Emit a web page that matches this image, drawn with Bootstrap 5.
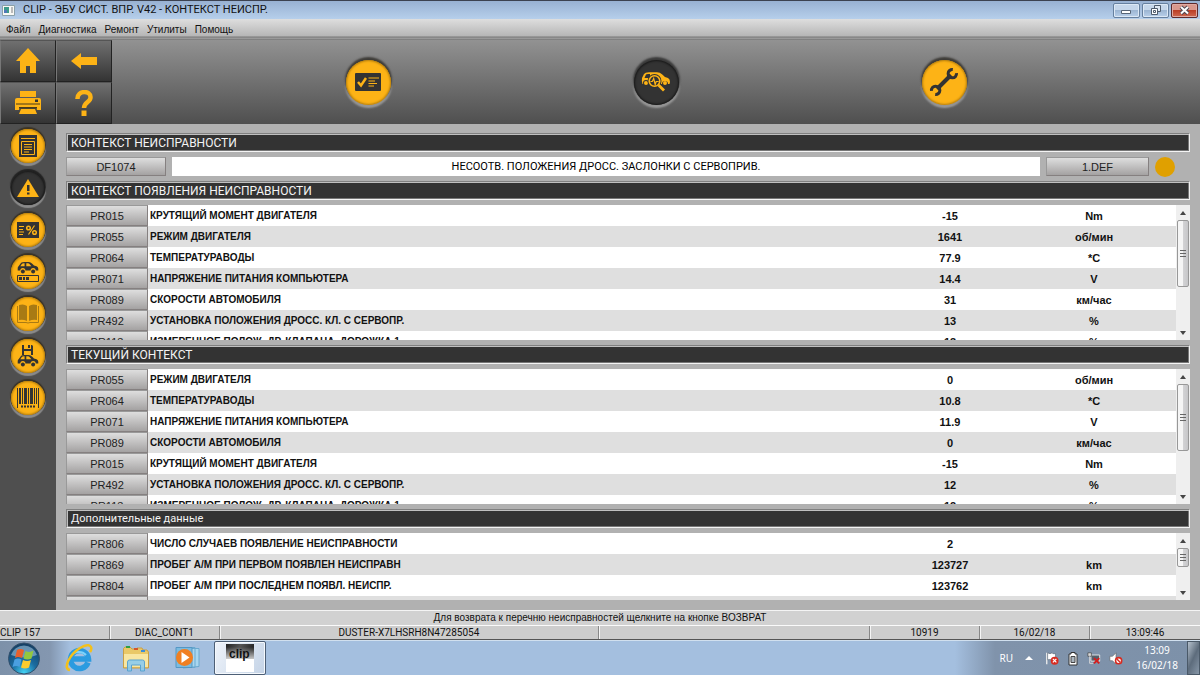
<!DOCTYPE html>
<html lang="ru">
<head>
<meta charset="utf-8">
<meta name="viewport" content="width=device-width, initial-scale=1">
<title>CLIP - ЭБУ СИСТ. ВПР. V42 - КОНТЕКСТ НЕИСПР.</title>
<link href="https://cdn.jsdelivr.net/npm/bootstrap@5.3.0/dist/css/bootstrap.min.css" rel="stylesheet">
<style>
  body { font-family: "Liberation Sans", Arial, sans-serif; font-size: 11px; line-height: 14px; color: #111; background: #b1b1b1; }
  button { font-size: 11px; line-height: 14px; color: #222; }
  svg { display: block; flex: none; }

  .titlebar { height: 19px; padding: 0 2px; border-top: 1px solid #3c4250; background: linear-gradient(#98b1d2, #b6cfeb); font-family: Roboto, sans-serif; font-size: 11px; }
  .winbtns { gap: 2px; }
  .winbtn { width: 27px; height: 15px; border: 1px solid #66809f; border-radius: 2px; background: linear-gradient(#c5d6ea 45%, #9db6d3 50%, #b9d0ea); box-shadow: inset 0 0 0 1px #dce8f5; }
  .winbtn-close { border-color: #5e2a2c; background: linear-gradient(#d9988d 45%, #bb3f27 50%, #cf6a52); box-shadow: inset 0 0 0 1px #e0aaa2; }
  .menubar { height: 21px; padding-left: 6px; background: linear-gradient(#dedede, #b6b6b6 17px, #777 18px, #999 19px, #999 20px, #686868 21px); font-size: 10px; }
  .menubar a { color: #111; text-decoration: none; }

  .topband { background: linear-gradient(#929292, #4f4f4f); height: 84px; }
  .navpad { width: 112px; display: grid; grid-template-columns: 1fr 1fr; }
  .navbtn { display: grid; place-items: center; padding: 0; border: 1px solid #333; border-color: #555 #222 #222 #777; background: linear-gradient(#707070, #343434); }
  .steps { padding: 0 112px; }
  .roundbtn { border: 0; border-radius: 50%; padding: 0; display: grid; place-items: center; background: #fdb316; color: #333; width: 34px; height: 34px;
    box-shadow: 0 -1px 1px 1px #3a3326, 0 2px 1px 1px #8c8c8c, inset 0 0 2px 1px #b77f0c; }
  .roundbtn.big { width: 45px; height: 45px; box-shadow: 0 -2px 2px 1px #3d3b37, 0 2px 2px 1px #999, inset 0 0 2px 1px #b77f0c; }
  .roundbtn.on { background: #333; color: #fdb316; box-shadow: 0 -1px 1px 1px #222, 0 2px 1px 1px #8c8c8c, inset 0 0 2px 1px #181818; }
  .roundbtn.big.on { box-shadow: 0 -2px 2px 1px #393939, 0 2px 2px 1px #999, inset 0 0 2px 1px #181818; }

  .middle, .workarea { min-width: 0; min-height: 0; }
  .sidebar { width: 56px; background: #4f4f4f; padding-top: 5px; gap: 8px; }
  .workarea { padding: 9px 10px 10px; gap: 5px; }
  .caption { height: 19px; margin: 0; padding: 0 4px; background: #333; color: #f4f4f4; font-family: Roboto, sans-serif; font-weight: 400; font-size: 12px; line-height: 18px;
    border: 1px solid #808080; border-right-color: #eee; border-bottom-color: #f4f4f4; box-shadow: inset 1px 1px 0 #c0c0c0, inset -1px -1px 0 #777; }
  .caption-minor { font-size: 11px; }
  .faultrow { height: 19px; gap: 6px; }
  .metal { border: 1px solid #999; border-right-color: #858080; border-bottom-color: #858080; background: linear-gradient(#dedede, #a4a2a2); padding: 0; }
  .faultrow .metal { width: 100px; flex: none; }
  .faultrow .state { width: 103px; }
  .faultrow input { border: 0; border-radius: 0; background: #fff; text-align: center; min-width: 0; padding: 0; font-family: Roboto, sans-serif; }
  .lamp { width: 20px; height: 20px; margin-right: 15px; border-radius: 50%; background: #e0a000; flex: none; }

  .panel { min-height: 0; background: #f0f0f0; }
  .panel-tall { flex: 135 1 0; }
  .panel-short { flex: 67 1 0; }
  .params { width: 100%; table-layout: fixed; font-weight: 700; background: #fff; }
  .params tr { height: 21px; }
  .params tr:nth-child(even) { background: #dfdfdf; }
  .params td, .params th { padding: 0; height: 21px; vertical-align: middle; white-space: nowrap; }
  .params td { text-align: center; }
  .params .what { text-align: left; padding-left: 2px; font-size: 10px; }
  .params .metal { width: 82px; height: 21px; display: block; }
  .c-code { width: 82px; } .c-val { width: 124px; } .c-unit { width: 164px; }

  .scroller { width: 14px; flex: none; background: #efefef; }
  .arrow { height: 15px; display: grid; place-items: center; flex: none; }
  .thumb { border: 1px solid #989898; border-radius: 2px; background: linear-gradient(90deg, #f5f5f5 45%, #d2d2d4 55%, #c6c6c8); display: grid; place-items: center; height: 67px; margin: 0 1px; flex: none; }
  .thumb-short { height: 19px; }

  .hint { height: 15px; border-top: 1px solid #f4f4f4; background: #d1d1d1; font-size: 10px; }
  .statusbar { height: 15px; background: #cdcdcd; font-family: Roboto, sans-serif; font-size: 10px; border-top: 1px solid #fafafa; border-bottom: 1px solid #555; }
  .statusbar > div { border-right: 1px solid #888; box-shadow: 1px 0 0 #f5f5f5; text-align: center; }
  .cell { width: 110px; }
  .cell-car { flex: 380 1 0; } .cell-free { flex: 272 1 0; }

  .taskbar { height: 35px; background: linear-gradient(90deg, #7d91a9 0, #8497b0 50px, #a4bfdf 70px, #a4bfdf calc(100% - 245px), #8093ab calc(100% - 205px), #7d91a9); border-top: 1px solid #d1e0ef; }
  .taskbar button { border: 0; background: none; padding: 0; display: grid; place-items: center; width: 52px; }
  .taskbar .orb { width: 48px; }
  .taskbar .browser { width: 62px; }
  .apps .current { border: 1px solid #4d5f76; border-radius: 2px; background: linear-gradient(120deg, #eef3fa, #c4d3e6); box-shadow: inset 0 0 0 1px #f5f9fd; }
  .tray { color: #fff; font-family: "Noto Sans", sans-serif; font-size: 10px; }
  .clock { width: 60px; text-align: center; line-height: 15px; }
  .taskbar .peek { width: 13px; border: 1px solid #4a5968; background: linear-gradient(115deg, #b4c0cc, #5d6c7c 50%, #8797a8); }
</style>
</head>
<body class="vh-100 d-flex flex-column overflow-hidden">

<svg width="0" height="0" class="position-absolute" aria-hidden="true">
  <symbol id="car" viewBox="0 0 24 14"><path fill="currentColor" fill-rule="evenodd" d="M1 5 4 1Q5 0 8 0h5q2 0 4 2l2 2 3 1q2 1 2 3v2h-3a3 3 0 0 0-6 0H9a3 3 0 0 0-6 0H0V7q0-1 1-2ZM5 2 3 5h5V1.500H7Q6 1.500 5 2Zm5-.5V5h6l-2-2.500q-1-1-2-1Z"/><circle cx="6" cy="11" r="2.300" fill="currentColor"/><circle cx="18" cy="11" r="2.300" fill="currentColor"/></symbol>
  <symbol id="up" viewBox="0 0 6 4"><path fill="#444" d="M3 0 6 4H0Z"/></symbol>
  <symbol id="down" viewBox="0 0 6 4"><path fill="#444" d="M3 4 6 0H0Z"/></symbol>
  <symbol id="grip" viewBox="0 0 6 8"><path stroke="#666" d="M0 .5h6M0 3.500h6M0 6.500h6"/></symbol>
</svg>

<header class="titlebar d-flex align-items-center flex-shrink-0">
  <svg width="13" height="11" viewBox="0 0 13 11"><path fill="#f8f8f4" stroke="#8ba0a8" d="M.5.500h12v10H.5z"/><path fill="#3d9b8a" d="M2 2h5v6H2z"/><path fill="#5078b8" d="M2 5h3v3H2z"/><path fill="#bbb" d="M9 2h2v6H9z"/></svg>
  <span class="ms-2 flex-grow-1">CLIP - ЭБУ СИСТ. ВПР. V42 - КОНТЕКСТ НЕИСПР.</span>
  <div class="winbtns d-flex">
    <button class="winbtn p-0" aria-label="Свернуть"><svg class="mx-auto" width="11" height="11" viewBox="0 0 11 11"><path fill="#fff" stroke="#576577" d="M.5 5.500h9v3h-9z"/></svg></button>
    <button class="winbtn p-0" aria-label="Восстановить"><svg class="mx-auto" width="12" height="11" viewBox="0 0 12 11"><path fill="#dde7f2" stroke="#4d5a6b" d="M4.500.5h6v6h-6z"/><path fill="#fff" stroke="#4d5a6b" d="M1.500 3.500h6v6h-6z"/><path fill="none" stroke="#4d5a6b" d="M3.500 5.500h2v2h-2z"/></svg></button>
    <button class="winbtn winbtn-close p-0" aria-label="Закрыть"><svg class="mx-auto" width="11" height="11" viewBox="0 0 11 11"><path stroke="#4c4652" stroke-width="4" d="m2 2 7 6.500M9 2 2 8.500"/><path stroke="#fff" stroke-width="2" d="m2 2 7 6.500M9 2 2 8.500"/></svg></button>
  </div>
</header>

<nav class="menubar d-flex align-items-center flex-shrink-0 gap-2" aria-label="Меню">
  <a href="#">Файл</a><a href="#">Диагностика</a><a href="#">Ремонт</a><a href="#">Утилиты</a><a href="#">Помощь</a>
</nav>

<div class="topband d-flex flex-shrink-0">
  <div class="navpad">
    <button class="navbtn" aria-label="Домой"><svg width="24" height="26" viewBox="0 0 24 26"><path fill="#fdb316" d="M12 0 24 13h-4v12h-6v-7h-4v7H4V13H0Z"/></svg></button>
    <button class="navbtn" aria-label="Назад"><svg width="26" height="16" viewBox="0 0 26 16"><path fill="#fdb316" d="M0 8 10 0v4h16v8H10v4Z"/></svg></button>
    <button class="navbtn" aria-label="Печать"><svg width="26" height="24" viewBox="0 0 26 24"><path fill="#fdb316" d="M5 0h16v6H5zM2 7h22q2 0 2 2v10h-4l-1-3H5l-1 3H0V9q0-2 2-2Z"/><path fill="#fdb316" d="M6 18h14l2 5H4Z"/><path fill="#4a3a18" d="M1 12.500h24v1H1zM4 16h18v1.500H4z"/><path fill="#333" d="M20 8.500h3v2.500h-3z"/></svg></button>
    <button class="navbtn" aria-label="Справка"><svg width="18" height="26" viewBox="0 0 18 26"><path fill="none" stroke="#fdb316" stroke-width="4.500" d="M2.500 9C2 0 16 0 15.500 7.500 15.500 12 9 12 9 18"/><path fill="#fdb316" d="M6.500 20.500h5V26h-5z"/></svg></button>
  </div>
  <div class="steps flex-grow-1 d-flex align-items-center">
    <div class="col d-flex justify-content-center"><button class="roundbtn big" aria-label="Контроль"><svg width="26" height="18" viewBox="0 0 26 18"><rect width="26" height="18" rx="1" fill="#333"/><path fill="none" stroke="#fdb316" stroke-width="2.500" d="m3 9 3 3.500L11 5"/><path stroke="#fdb316" stroke-width="1.200" d="M13.500 5H24M13.500 8H20M13.500 10.500H22M13.500 13H19"/></svg></button></div>
    <div class="col d-flex justify-content-center"><button class="roundbtn big on" aria-label="Диагностика"><svg width="30" height="20" viewBox="0 0 30 20"><path fill="currentColor" fill-rule="evenodd" d="M1 6 3 2Q4 .5 8 .3h8q3 0 5 2l3 2.700 3 1q2 1 2 4l-.5 2h-1.500a3 3 0 0 0-6 0H1.500Q.5 8 1 6ZM5 2.500 3.500 6H9V2H7Q5.500 2 5 2.500Z"/><circle cx="24" cy="11" r="2" fill="currentColor"/><circle cx="5" cy="11" r="3" fill="#333"/><circle cx="5" cy="11" r="2" fill="currentColor"/><circle cx="13.500" cy="9" r="7" fill="#333"/><circle cx="13.500" cy="9" r="5.300" fill="#333" stroke="currentColor" stroke-width="1.600"/><path fill="none" stroke="currentColor" stroke-width="1.200" d="M9.500 9.500h1.800l1.400-3 1.500 6 1-3h2.500"/><path stroke="#333" stroke-width="5" d="m19 14 2 2"/><path stroke="currentColor" stroke-width="2.800" d="m17.500 13 5.500 5.500"/></svg></button></div>
    <div class="col d-flex justify-content-center"><button class="roundbtn big" aria-label="Ремонт"><svg width="30" height="30" viewBox="0 0 30 30"><path stroke="#333" stroke-width="4" d="m8 22 14-14"/><path fill="none" stroke="#333" stroke-width="3" d="M23.800 2.500a4.200 4.200 0 1 0 3.700 3.700M6.200 27.500a4.200 4.200 0 1 0-3.700-3.700"/></svg></button></div>
  </div>
</div>

<div class="middle d-flex flex-grow-1">
  <nav class="sidebar d-flex flex-column align-items-center flex-shrink-0" aria-label="Инструменты">
    <button class="roundbtn" aria-label="Отчёт"><svg width="18" height="22" viewBox="0 0 18 22"><path fill="#333" d="M0 0h18v22H0z"/><path stroke="#fdb316" fill="none" d="M2 3.500h14M2.500 6.500h13v13h-13z"/><path stroke="#fdb316" d="M5 9.500h8M5 12h8M5 14.500h8M5 17h5"/></svg></button>
    <button class="roundbtn on" aria-label="Неисправности"><svg width="22" height="18" viewBox="0 0 22 18"><path fill="#fdb316" d="M11 0 22 18H0Z"/><path fill="#333" d="M10 6h2.500v6H10zM10 13.500h2.500v2H10z"/></svg></button>
    <button class="roundbtn" aria-label="Параметры"><svg width="22" height="16" viewBox="0 0 22 16"><path fill="#333" d="M0 0h22v16H0z"/><path stroke="#fdb316" fill="none" stroke-width="1.200" d="M2 4.500h5M2 7.500h4M2 10h5M2 12.500h4M11.500 12.500l6-9"/><circle cx="11.500" cy="6" r="1.800" fill="none" stroke="#fdb316" stroke-width="1.500"/><circle cx="17.500" cy="10.500" r="1.800" fill="none" stroke="#fdb316" stroke-width="1.500"/></svg></button>
    <button class="roundbtn" aria-label="Состояние автомобиля"><svg width="22" height="20" viewBox="0 0 22 20"><use href="#car" width="22" height="12"/><path fill="none" stroke="#333" d="M.5 13.500h21v6H.5z"/><path fill="#333" d="M2 15h3v3H2zM6 15h2v3H6zM9 15h3v3H9z"/></svg></button>
    <button class="roundbtn" aria-label="Документация"><svg width="22" height="20" viewBox="0 0 22 20"><path fill="#a87a14" d="M2 1q5-1.500 8 1v15q-4-2-8-1zM20 1q-5-1.500-8 1v15q4-2 8-1z"/><path fill="none" stroke="#a87a14" d="M.5 2v16.500H9q2 1 4 0h8.500V2"/></svg></button>
    <button class="roundbtn" aria-label="Сохранить"><svg width="22" height="22" viewBox="0 0 22 22"><path fill="#333" fill-rule="evenodd" d="M5 0h2v4h7V0h1l1 1v9H5zM7 6v4h7V6z"/><path fill="#333" d="M11 0h2v3h-2z"/><use href="#car" y="10" width="22" height="12"/></svg></button>
    <button class="roundbtn" aria-label="Штрихкод"><svg width="22" height="20" viewBox="0 0 22 20"><path fill="#333" d="M0 0h1v20H0zM2 0h2v16H2zM5 0h1v16H5zM7 0h3v16H7zM11 0h1v16h-1zM13 0h3v16h-3zM17 0h1v16h-1zM19 0h1v16h-1zM21 0h1v20h-1z"/><path stroke="#333" stroke-width="2" stroke-dasharray="2 1" d="M4 18.500h14"/></svg></button>
  </nav>

  <main class="workarea d-flex flex-column flex-grow-1">
    <h1 class="caption flex-shrink-0">КОНТЕКСТ НЕИСПРАВНОСТИ</h1>
    <div class="faultrow d-flex flex-shrink-0">
      <button class="metal">DF1074</button>
      <input class="flex-grow-1" type="text" readonly aria-label="Неисправность" value="НЕСООТВ. ПОЛОЖЕНИЯ ДРОСС. ЗАСЛОНКИ С СЕРВОПРИВ.">
      <button class="metal state">1.DEF</button>
      <span class="lamp"></span>
    </div>

    <h2 class="caption flex-shrink-0">КОНТЕКСТ ПОЯВЛЕНИЯ НЕИСПРАВНОСТИ</h2>
    <section class="panel panel-tall d-flex">
      <div class="flex-grow-1 overflow-hidden">
        <table class="params">
          <colgroup><col class="c-code"><col><col class="c-val"><col class="c-unit"></colgroup>
          <tbody>
          <tr><th><button class="metal">PR015</button></th><td class="what">КРУТЯЩИЙ МОМЕНТ ДВИГАТЕЛЯ</td><td>-15</td><td>Nm</td></tr>
          <tr><th><button class="metal">PR055</button></th><td class="what">РЕЖИМ ДВИГАТЕЛЯ</td><td>1641</td><td>об/мин</td></tr>
          <tr><th><button class="metal">PR064</button></th><td class="what">ТЕМПЕРАТУРАВОДЫ</td><td>77.9</td><td>*C</td></tr>
          <tr><th><button class="metal">PR071</button></th><td class="what">НАПРЯЖЕНИЕ ПИТАНИЯ КОМПЬЮТЕРА</td><td>14.4</td><td>V</td></tr>
          <tr><th><button class="metal">PR089</button></th><td class="what">СКОРОСТИ АВТОМОБИЛЯ</td><td>31</td><td>км/час</td></tr>
          <tr><th><button class="metal">PR492</button></th><td class="what">УСТАНОВКА ПОЛОЖЕНИЯ ДРОСС. КЛ. С СЕРВОПР.</td><td>13</td><td>%</td></tr>
          <tr><th><button class="metal">PR113</button></th><td class="what">ИЗМЕРЕННОЕ ПОЛОЖ. ДР. КЛАПАНА, ДОРОЖКА 1</td><td>13</td><td>%</td></tr>
          </tbody>
        </table>
      </div>
      <div class="scroller d-flex flex-column">
        <div class="arrow"><svg width="6" height="4"><use href="#up"/></svg></div>
        <div class="thumb"><svg width="6" height="8"><use href="#grip"/></svg></div>
        <div class="arrow mt-auto"><svg width="6" height="4"><use href="#down"/></svg></div>
      </div>
    </section>

    <h2 class="caption flex-shrink-0">ТЕКУЩИЙ КОНТЕКСТ</h2>
    <section class="panel panel-tall d-flex">
      <div class="flex-grow-1 overflow-hidden">
        <table class="params">
          <colgroup><col class="c-code"><col><col class="c-val"><col class="c-unit"></colgroup>
          <tbody>
          <tr><th><button class="metal">PR055</button></th><td class="what">РЕЖИМ ДВИГАТЕЛЯ</td><td>0</td><td>об/мин</td></tr>
          <tr><th><button class="metal">PR064</button></th><td class="what">ТЕМПЕРАТУРАВОДЫ</td><td>10.8</td><td>*C</td></tr>
          <tr><th><button class="metal">PR071</button></th><td class="what">НАПРЯЖЕНИЕ ПИТАНИЯ КОМПЬЮТЕРА</td><td>11.9</td><td>V</td></tr>
          <tr><th><button class="metal">PR089</button></th><td class="what">СКОРОСТИ АВТОМОБИЛЯ</td><td>0</td><td>км/час</td></tr>
          <tr><th><button class="metal">PR015</button></th><td class="what">КРУТЯЩИЙ МОМЕНТ ДВИГАТЕЛЯ</td><td>-15</td><td>Nm</td></tr>
          <tr><th><button class="metal">PR492</button></th><td class="what">УСТАНОВКА ПОЛОЖЕНИЯ ДРОСС. КЛ. С СЕРВОПР.</td><td>12</td><td>%</td></tr>
          <tr><th><button class="metal">PR113</button></th><td class="what">ИЗМЕРЕННОЕ ПОЛОЖ. ДР. КЛАПАНА, ДОРОЖКА 1</td><td>12</td><td>%</td></tr>
          </tbody>
        </table>
      </div>
      <div class="scroller d-flex flex-column">
        <div class="arrow"><svg width="6" height="4"><use href="#up"/></svg></div>
        <div class="thumb"><svg width="6" height="8"><use href="#grip"/></svg></div>
        <div class="arrow mt-auto"><svg width="6" height="4"><use href="#down"/></svg></div>
      </div>
    </section>

    <h2 class="caption caption-minor flex-shrink-0">Дополнительные данные</h2>
    <section class="panel panel-short d-flex">
      <div class="flex-grow-1 overflow-hidden">
        <table class="params">
          <colgroup><col class="c-code"><col><col class="c-val"><col class="c-unit"></colgroup>
          <tbody>
          <tr><th><button class="metal">PR806</button></th><td class="what">ЧИСЛО СЛУЧАЕВ ПОЯВЛЕНИЕ НЕИСПРАВНОСТИ</td><td>2</td><td></td></tr>
          <tr><th><button class="metal">PR869</button></th><td class="what">ПРОБЕГ А/М ПРИ ПЕРВОМ ПОЯВЛЕН НЕИСПРАВН</td><td>123727</td><td>km</td></tr>
          <tr><th><button class="metal">PR804</button></th><td class="what">ПРОБЕГ А/М ПРИ ПОСЛЕДНЕМ ПОЯВЛ. НЕИСПР.</td><td>123762</td><td>km</td></tr>
          <tr><th><button class="metal" aria-label="Далее"></button></th><td></td><td></td><td></td></tr>
          </tbody>
        </table>
      </div>
      <div class="scroller d-flex flex-column">
        <div class="arrow"><svg width="6" height="4"><use href="#up"/></svg></div>
        <div class="thumb thumb-short"><svg width="6" height="8"><use href="#grip"/></svg></div>
        <div class="arrow mt-auto"><svg width="6" height="4"><use href="#down"/></svg></div>
      </div>
    </section>
  </main>
</div>

<div class="hint text-center flex-shrink-0">Для возврата к перечню неисправностей щелкните на кнопке ВОЗВРАТ</div>
<div class="statusbar d-flex flex-shrink-0">
  <div class="cell text-start">CLIP 157</div><div class="cell">DIAC_CONT1</div><div class="cell-car">DUSTER-X7LHSRH8N47285054</div><div class="cell-free"></div><div class="cell">10919</div><div class="cell">16/02/18</div><div class="cell border-0">13:09:46</div>
</div>

<footer class="taskbar d-flex justify-content-between flex-shrink-0">
  <div class="apps d-flex">
    <button class="orb" aria-label="Пуск"><svg width="34" height="33" viewBox="0 0 34 33"><defs><radialGradient id="orbg" cx=".5" cy=".95" r=".9"><stop offset="0" stop-color="#42d3f5"/><stop offset=".45" stop-color="#1b6ca0"/><stop offset="1" stop-color="#154066"/></radialGradient></defs><circle cx="17" cy="16.500" r="15.500" fill="url(#orbg)" stroke="#33506c"/><path fill="#9fc3dc" opacity=".6" d="M4 13a13.500 13 0 0 1 26 0q-12 5-26 0Z"/><path fill="#e8602c" d="M10 8q3-2 7 0l-2 8q-4-2-7 0Z"/><path fill="#93c83e" d="M18.500 9q4 2 8-.5l-2 8q-4 2-8 0Z"/><path fill="#4a9fe0" d="M7.500 17.500q3.500-2 7 0l-2 7.500q-3-2-7 0Z"/><path fill="#fccb2e" d="M16 18q4 2 8 0l-2 7.500q-4 2-8 0Z"/></svg></button>
    <button class="browser" aria-label="Internet Explorer"><svg width="28" height="28" viewBox="0 0 28 28"><path fill="none" stroke="#2b9be0" stroke-width="5.500" d="M23 18.500A9 9 0 1 1 23.500 15H7"/><path fill="none" stroke="#7ed2fa" stroke-width="2" d="M6 12a9 8 0 0 1 15-1"/><path fill="none" stroke="#f3c01c" stroke-width="2.500" d="M5 26C-3 25 5 10 15 4q9-5 11-1 1 2-1 5"/></svg></button>
    <button aria-label="Проводник"><svg width="28" height="27" viewBox="0 0 28 27"><path fill="#e9c868" stroke="#c99f45" d="M1.500 3.500 3 2h5l2 2h4l1-1h5l1 2h4l1.500 2v16h-25z"/><path fill="#f8e6a2" d="M2 9h24v13H2z"/><path fill="#2f9d45" d="M4 1h4v2H4z"/><path fill="#d5552b" d="M12 3h4v2h-4z"/><path fill="#3c8ed8" d="M19 5h4v2h-4z"/><path fill="#8ccbed" fill-opacity=".9" stroke="#5ba3cf" d="M5.500 26v-9q0-2 2-2h13q2 0 2 2v9h-4v-6h-9v6z"/></svg></button>
    <button aria-label="Проигрыватель"><svg width="26" height="24" viewBox="0 0 26 24"><path fill="#a9d6ef" stroke="#6ba9cf" d="M8 2.500h16v18L8 22zM5 1.500h15v20H5z"/><path fill="#7abbe0" stroke="#5597c4" d="M1 1.500h16v20H1z"/><circle cx="9.500" cy="11.500" r="8.500" fill="#f07f22"/><path fill="#fff" d="M6.500 6v11l8-5.500z"/></svg></button>
    <button class="current" aria-label="CLIP"><svg width="28" height="28" viewBox="0 0 28 28"><defs><linearGradient id="cg" x2="1" y2=".3"><stop offset="0" stop-color="#222"/><stop offset=".5" stop-color="#555"/><stop offset="1" stop-color="#222"/></linearGradient><linearGradient id="cf" x2="0" y2="1"><stop offset=".2" stop-color="#fff" stop-opacity="0"/><stop offset="1" stop-color="#fff" stop-opacity=".75"/></linearGradient></defs><path fill="#fff" d="M0 0h28v28H0z"/><path fill="url(#cg)" d="M0 0h28v15H0z"/><path fill="url(#cf)" d="M0 0h28v15H0z"/><text x="3" y="14" font-family="Liberation Sans, sans-serif" font-size="12" font-weight="700" fill="#111">clip</text></svg></button>
  </div>
  <div class="tray d-flex align-items-center">
    <div class="d-flex align-items-center gap-2">
      <span class="me-1">RU</span>
      <svg class="me-1" width="8" height="4" viewBox="0 0 8 4"><path fill="#fff" d="M4 0 8 4H0Z"/></svg>
      <svg width="14" height="15" viewBox="0 0 16 15"><path stroke="#eee" stroke-width="1.500" d="M2 1v13"/><path fill="#fff" stroke="#4c5866" stroke-width=".6" d="M3 1q3 2 5 0l1 1h3v7H8Q6 8 3 9Z"/><circle cx="11" cy="10" r="4.500" fill="#d82b20"/><path stroke="#fff" stroke-width="1.400" d="m9 8 4 4m0-4-4 4"/></svg>
      <svg width="12" height="15" viewBox="1 0 12 15"><path fill="#fff" stroke="#333" d="M5 1.500h4v1.500h2v11H3V3h2z"/><path fill="#aab4bd" stroke="#444" d="M5 5.500h4v6H5z"/></svg>
      <svg width="14" height="15" viewBox="0 0 16 15"><path fill="#55606c" stroke="#eee" d="M4.500 3.500h10v7h-10z"/><path fill="#ddd" stroke="#333" stroke-width=".7" d="M1 1h4v4H1z"/><path fill="none" stroke="#ddd" d="M3 5v8h4"/><path stroke="#d51d1d" stroke-width="2.200" d="m8 7 6 6m0-6-6 6"/></svg>
      <svg width="14" height="15" viewBox="0 0 16 15"><path fill="#fff" stroke="#555" stroke-width=".6" d="M1 5h3l4-4v13l-4-4H1z"/><circle cx="11" cy="10" r="3.500" fill="#fff" stroke="#d82b20" stroke-width="1.800"/><path stroke="#d82b20" stroke-width="1.600" d="m9 8 4 4"/></svg>
    </div>
    <div class="clock ms-1"><div>13:09</div><div>16/02/18</div></div>
    <button class="peek align-self-stretch" aria-label="Показать рабочий стол"></button>
  </div>
</footer>
<script src="https://cdn.jsdelivr.net/npm/bootstrap@5.3.0/dist/js/bootstrap.bundle.min.js"></script>
</body>
</html>
